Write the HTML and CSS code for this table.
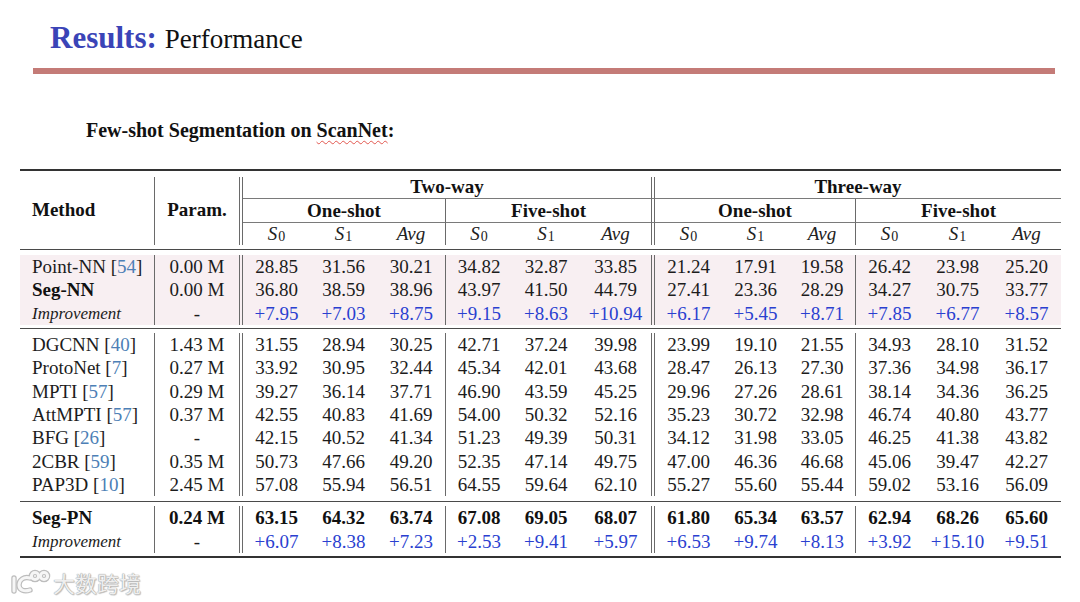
FILE: index.html
```html
<!DOCTYPE html>
<html>
<head>
<meta charset="utf-8">
<link rel="stylesheet" href="styles.css">
</head>
<body>
<div class="page">
  <h1 class="title"><span class="kw">Results:</span> <span class="rest">Performance</span></h1>
  <div class="bar"></div>
  <h2 class="subtitle">Few-shot Segmentation on <span class="spell">ScanNet</span>:</h2>

  <div class="tbl">
    <div class="hr hr-top"></div>

    <div class="c h method hd">Method</div>
    <div class="c h param hd">Param.</div>
    <div class="c sp hd"></div>
    <div class="c h way">Two-way</div>
    <div class="c sp2 ul"></div>
    <div class="c h way3">Three-way</div>

    <div class="c h shot ul">One-shot</div>
    <div class="c h shot ul bl">Five-shot</div>
    <div class="c sp2 ul"></div>
    <div class="c h shot ul">One-shot</div>
    <div class="c h shot ul bl">Five-shot</div>

    <div class="row sub">
      <div class="c"><i>S</i><sub>0</sub></div><div class="c"><i>S</i><sub>1</sub></div><div class="c"><i>Avg</i></div>
      <div class="c bl"><i>S</i><sub>0</sub></div><div class="c"><i>S</i><sub>1</sub></div><div class="c"><i>Avg</i></div>
      <div class="c sp2"></div>
      <div class="c"><i>S</i><sub>0</sub></div><div class="c"><i>S</i><sub>1</sub></div><div class="c"><i>Avg</i></div>
      <div class="c bl"><i>S</i><sub>0</sub></div><div class="c"><i>S</i><sub>1</sub></div><div class="c"><i>Avg</i></div>
    </div>

    <div class="hr hr-mid1"></div>

    <div class="row pk">
      <div class="c m">Point-NN [<span class="ref">54</span>]</div><div class="c p">0.00 M</div><div class="c sp"></div>
      <div class="c">28.85</div><div class="c">31.56</div><div class="c">30.21</div>
      <div class="c bl">34.82</div><div class="c">32.87</div><div class="c">33.85</div>
      <div class="c sp"></div>
      <div class="c">21.24</div><div class="c">17.91</div><div class="c">19.58</div>
      <div class="c bl">26.42</div><div class="c">23.98</div><div class="c">25.20</div>
    </div>
    <div class="row pk">
      <div class="c m b">Seg-NN</div><div class="c p">0.00 M</div><div class="c sp"></div>
      <div class="c">36.80</div><div class="c">38.59</div><div class="c">38.96</div>
      <div class="c bl">43.97</div><div class="c">41.50</div><div class="c">44.79</div>
      <div class="c sp"></div>
      <div class="c">27.41</div><div class="c">23.36</div><div class="c">28.29</div>
      <div class="c bl">34.27</div><div class="c">30.75</div><div class="c">33.77</div>
    </div>
    <div class="row pk imp">
      <div class="c m it">Improvement</div><div class="c p">-</div><div class="c sp"></div>
      <div class="c">+7.95</div><div class="c">+7.03</div><div class="c">+8.75</div>
      <div class="c bl">+9.15</div><div class="c">+8.63</div><div class="c">+10.94</div>
      <div class="c sp"></div>
      <div class="c">+6.17</div><div class="c">+5.45</div><div class="c">+8.71</div>
      <div class="c bl">+7.85</div><div class="c">+6.77</div><div class="c">+8.57</div>
    </div>

    <div class="hr hr-mid2"></div>

    <div class="row">
      <div class="c m">DGCNN [<span class="ref">40</span>]</div><div class="c p">1.43 M</div><div class="c sp"></div>
      <div class="c">31.55</div><div class="c">28.94</div><div class="c">30.25</div>
      <div class="c bl">42.71</div><div class="c">37.24</div><div class="c">39.98</div>
      <div class="c sp"></div>
      <div class="c">23.99</div><div class="c">19.10</div><div class="c">21.55</div>
      <div class="c bl">34.93</div><div class="c">28.10</div><div class="c">31.52</div>
    </div>
    <div class="row">
      <div class="c m">ProtoNet [<span class="ref">7</span>]</div><div class="c p">0.27 M</div><div class="c sp"></div>
      <div class="c">33.92</div><div class="c">30.95</div><div class="c">32.44</div>
      <div class="c bl">45.34</div><div class="c">42.01</div><div class="c">43.68</div>
      <div class="c sp"></div>
      <div class="c">28.47</div><div class="c">26.13</div><div class="c">27.30</div>
      <div class="c bl">37.36</div><div class="c">34.98</div><div class="c">36.17</div>
    </div>
    <div class="row">
      <div class="c m">MPTI [<span class="ref">57</span>]</div><div class="c p">0.29 M</div><div class="c sp"></div>
      <div class="c">39.27</div><div class="c">36.14</div><div class="c">37.71</div>
      <div class="c bl">46.90</div><div class="c">43.59</div><div class="c">45.25</div>
      <div class="c sp"></div>
      <div class="c">29.96</div><div class="c">27.26</div><div class="c">28.61</div>
      <div class="c bl">38.14</div><div class="c">34.36</div><div class="c">36.25</div>
    </div>
    <div class="row">
      <div class="c m">AttMPTI [<span class="ref">57</span>]</div><div class="c p">0.37 M</div><div class="c sp"></div>
      <div class="c">42.55</div><div class="c">40.83</div><div class="c">41.69</div>
      <div class="c bl">54.00</div><div class="c">50.32</div><div class="c">52.16</div>
      <div class="c sp"></div>
      <div class="c">35.23</div><div class="c">30.72</div><div class="c">32.98</div>
      <div class="c bl">46.74</div><div class="c">40.80</div><div class="c">43.77</div>
    </div>
    <div class="row">
      <div class="c m">BFG [<span class="ref">26</span>]</div><div class="c p">-</div><div class="c sp"></div>
      <div class="c">42.15</div><div class="c">40.52</div><div class="c">41.34</div>
      <div class="c bl">51.23</div><div class="c">49.39</div><div class="c">50.31</div>
      <div class="c sp"></div>
      <div class="c">34.12</div><div class="c">31.98</div><div class="c">33.05</div>
      <div class="c bl">46.25</div><div class="c">41.38</div><div class="c">43.82</div>
    </div>
    <div class="row">
      <div class="c m">2CBR [<span class="ref">59</span>]</div><div class="c p">0.35 M</div><div class="c sp"></div>
      <div class="c">50.73</div><div class="c">47.66</div><div class="c">49.20</div>
      <div class="c bl">52.35</div><div class="c">47.14</div><div class="c">49.75</div>
      <div class="c sp"></div>
      <div class="c">47.00</div><div class="c">46.36</div><div class="c">46.68</div>
      <div class="c bl">45.06</div><div class="c">39.47</div><div class="c">42.27</div>
    </div>
    <div class="row">
      <div class="c m">PAP3D [<span class="ref">10</span>]</div><div class="c p">2.45 M</div><div class="c sp"></div>
      <div class="c">57.08</div><div class="c">55.94</div><div class="c">56.51</div>
      <div class="c bl">64.55</div><div class="c">59.64</div><div class="c">62.10</div>
      <div class="c sp"></div>
      <div class="c">55.27</div><div class="c">55.60</div><div class="c">55.44</div>
      <div class="c bl">59.02</div><div class="c">53.16</div><div class="c">56.09</div>
    </div>

    <div class="hr hr-mid3"></div>

    <div class="row best">
      <div class="c m">Seg-PN</div><div class="c p">0.24 M</div><div class="c sp"></div>
      <div class="c">63.15</div><div class="c">64.32</div><div class="c">63.74</div>
      <div class="c bl">67.08</div><div class="c">69.05</div><div class="c">68.07</div>
      <div class="c sp"></div>
      <div class="c">61.80</div><div class="c">65.34</div><div class="c">63.57</div>
      <div class="c bl">62.94</div><div class="c">68.26</div><div class="c">65.60</div>
    </div>
    <div class="row imp">
      <div class="c m it">Improvement</div><div class="c p">-</div><div class="c sp"></div>
      <div class="c">+6.07</div><div class="c">+8.38</div><div class="c">+7.23</div>
      <div class="c bl">+2.53</div><div class="c">+9.41</div><div class="c">+5.97</div>
      <div class="c sp"></div>
      <div class="c">+6.53</div><div class="c">+9.74</div><div class="c">+8.13</div>
      <div class="c bl">+3.92</div><div class="c">+15.10</div><div class="c">+9.51</div>
    </div>

    <div class="hr hr-bot"></div>
  </div>

  <div class="wm">
    <svg class="wm-logo" width="42" height="26" viewBox="0 0 42 26">
      <g fill="none" stroke="#bdbdbd" stroke-width="5.4" stroke-linecap="round">
        <path d="M5 9 L5 22"/>
        <path d="M21 9 C15 7 10 11 10 16 C10 21 15 23 21 21"/>
        <circle cx="26" cy="7" r="3.6"/>
        <circle cx="35" cy="7" r="3.6"/>
      </g>
      <g fill="none" stroke="#f6f6f6" stroke-width="3" stroke-linecap="round">
        <path d="M5 9 L5 22"/>
        <path d="M21 9 C15 7 10 11 10 16 C10 21 15 23 21 21"/>
        <circle cx="26" cy="7" r="3.6"/>
        <circle cx="35" cy="7" r="3.6"/>
      </g>
    </svg>
    <span class="wm-text">大数跨境</span>
  </div>
</div>
</body>
</html>
```

FILE: styles.css
```css
* { box-sizing: border-box; }

html, body {
  margin: 0;
  padding: 0;
  background: #ffffff;
}

.page {
  width: 1080px;
  height: 602px;
  padding-top: 20px;
  overflow: hidden;
  font-family: "Liberation Serif", "Times New Roman", serif;
  color: #111;
}

.title {
  margin: 0 0 0 50px;
  height: 34px;
  line-height: 34px;
  font-weight: normal;
  white-space: nowrap;
}

.title .kw {
  font-size: 31px;
  font-weight: bold;
  color: #3a44b7;
}

.title .rest {
  font-size: 27px;
  color: #111;
}

.bar {
  margin: 14px 25px 0 33px;
  height: 6px;
  background: #c47b77;
}

.subtitle {
  margin: 44px 0 0 86px;
  font-size: 20px;
  line-height: 24px;
  font-weight: bold;
  color: #111;
}

.spell {
  text-decoration: underline wavy #e2574f;
  text-decoration-thickness: 1px;
  text-underline-offset: 3px;
}

/* ---------- table ---------- */
.tbl {
  margin: 27px 0 0 20px;
  width: 1041px;
  display: grid;
  grid-template-columns: 135px 84px 4px 67px 67px 68px 67px 68px 71px 4px 67px 67px 66px 68px 69px 69px;
  grid-template-rows:
    8px 22px 24px 22px
    10px 23.33px 23.33px 23.34px
    8px 23.33px 23.33px 23.33px 23.34px 23.33px 23.33px 23.34px
    10px 23.33px 23.34px
    6px;
}

.row { display: contents; }

.c {
  display: flex;
  align-items: center;
  justify-content: center;
  font-size: 19px;
  line-height: 21px;
  color: #1c1c1c;
  white-space: nowrap;
}

.h { font-weight: bold; color: #111; }

.hd { grid-row: span 3; }
.method { justify-content: flex-start; padding-left: 12px; padding-bottom: 3px; border-right: 1px solid #6a6a6a; }
.param { padding-bottom: 3px; }
.way, .way3 { grid-column: span 6; border-bottom: 1px solid #7a7a7a; padding-bottom: 2px; }
.shot { grid-column: span 3; padding-bottom: 1px; }
.ul { border-bottom: 1px solid #7a7a7a; }

.sp { border-left: 1px solid #6a6a6a; border-right: 1px solid #6a6a6a; }
.sp2 { border-left: 1px solid #6a6a6a; border-right: 1px solid #6a6a6a; }
.bl { border-left: 1px solid #6a6a6a; }

.sub .c { color: #222; padding-bottom: 2px; }
.sub i { font-style: italic; }
.sub sub {
  font-size: 14px;
  line-height: 0;
  position: relative;
  top: 4px;
  vertical-align: baseline;
  margin-left: 1px;
}

.m { justify-content: flex-start; padding-left: 12px; border-right: 1px solid #6a6a6a; }
.b { font-weight: bold; color: #111; }
.it { font-style: italic; font-size: 17px; }
.ref { color: #4d7fb6; }

.pk .c { background: #f8eff2; }

.imp .c { color: #2a3fd0; }
.imp .c.m, .imp .c.p { color: #1c1c1c; }

.best .c { font-weight: bold; color: #111; }

/* rules */
.hr { grid-column: 1 / -1; align-self: start; height: 0; }
.hr-top { border-top: 2px solid #333; }
.hr-mid1 { margin-top: 3.5px; border-top: 1.4px solid #4a4a4a; }
.hr-mid2 { margin-top: 3px; border-top: 1.4px solid #4a4a4a; }
.hr-mid3 { margin-top: 4.5px; border-top: 1.4px solid #4a4a4a; }
.hr-bot { margin-top: 3px; border-top: 2px solid #333; }

/* watermark */
.wm {
  margin: 9px 0 0 9px;
  display: flex;
  align-items: center;
  gap: 2px;
  height: 28px;
}

.wm-logo { display: block; }

.wm-text {
  font-family: "Noto Sans CJK SC", sans-serif;
  font-size: 22px;
  line-height: 28px;
  color: #efefef;
  letter-spacing: 0;
  text-shadow: 0 0 1px #9e9e9e, 0 0 1px #9e9e9e, 1px 1px 1px #c4c4c4;
}
```
